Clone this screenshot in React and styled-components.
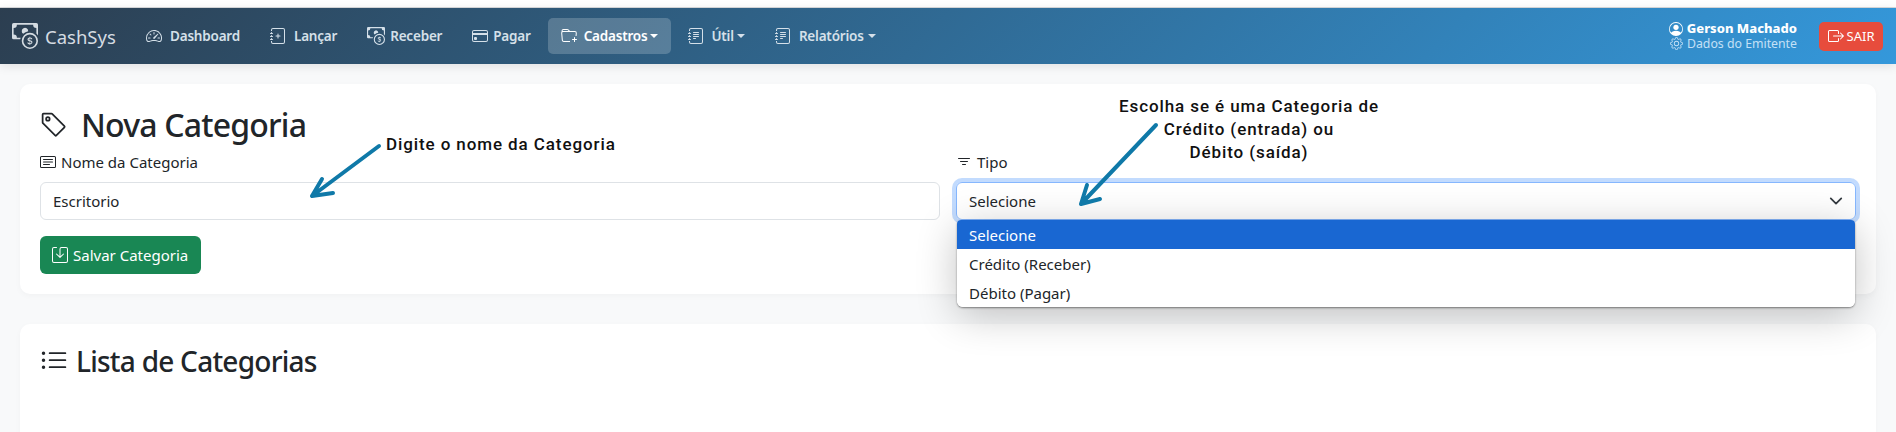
import React from 'react';
import styled, { createGlobalStyle } from 'styled-components';
import {
  BsCashCoin,
  BsSpeedometer2,
  BsJournalPlus,
  BsCreditCard,
  BsFolderPlus,
  BsJournalText,
  BsPersonCircle,
  BsGear,
  BsBoxArrowRight,
  BsTag,
  BsCardText,
  BsFilter,
  BsSave,
  BsListUl
} from 'react-icons/bs';

const fontStack = '"Noto Sans", "Open Sans", sans-serif';

const GlobalStyle = createGlobalStyle`
  html, body {
    margin: 0;
    height: 432px;
    overflow: hidden;
    background: #f8f9fa;
    font-family: ${fontStack};
    color: #212529;
  }
  * {
    box-sizing: border-box;
  }
`;

const Page = styled.div`
  position: relative;
  height: 432px;
  overflow: hidden;
`;

const TopStrip = styled.div`
  height: 8px;
  background: #fff;
  border-bottom: 1px solid #d9dadc;
`;

const Navbar = styled.nav`
  height: 56px;
  display: flex;
  align-items: center;
  padding: 0 13px 0 12px;
  background: linear-gradient(135deg, #2c3e50, #3498db);
  box-shadow: 0 2px 10px rgba(0, 0, 0, 0.1);
  position: relative;
`;

const Brand = styled.div`
  display: flex;
  align-items: center;
  gap: 7px;
  width: 121px;
  font-size: 18.5px;
  color: #d5dce2;
`;

const NavList = styled.div`
  display: flex;
  align-items: center;
  gap: 4px;
`;

const NavLink = styled.div`
  height: 36px;
  display: flex;
  align-items: center;
  gap: ${(p) => p.$gap || 8}px;
  padding: 0 13px;
  border-radius: 5px;
  font-size: 13.5px;
  font-weight: 600;
  letter-spacing: -0.2px;
  color: ${(p) => (p.$active ? '#fff' : '#d5e0e9')};
  background: ${(p) => (p.$active ? 'rgba(255, 255, 255, 0.2)' : 'transparent')};
`;

const Caret = styled.span`
  width: 0;
  height: 0;
  margin-left: -4px;
  border-top: 4px solid currentColor;
  border-left: 4px solid transparent;
  border-right: 4px solid transparent;
`;

const UserArea = styled.div`
  margin-left: auto;
  display: flex;
  align-items: center;
  gap: 22px;
`;

const UserBlock = styled.div`
  display: flex;
  flex-direction: column;
  align-items: flex-end;
  line-height: 15px;
`;

const UserName = styled.div`
  display: flex;
  align-items: center;
  gap: 4px;
  font-size: 13px;
  color: #fff;
  font-weight: 800;
`;

const UserLink = styled.div`
  display: flex;
  align-items: center;
  gap: 4px;
  font-size: 12.3px;
  color: #c4e0f6;
`;

const LogoutButton = styled.div`
  width: 64px;
  height: 29px;
  display: flex;
  align-items: center;
  justify-content: center;
  gap: 3px;
  border-radius: 5px;
  background: #e74c3c;
  color: #fff;
  font-size: 13px;
`;

const Main = styled.main`
  padding: 20px 20px 0;
  display: flex;
  flex-direction: column;
  gap: 30px;
`;

const Card = styled.section`
  background: #fff;
  border-radius: 10px;
  padding: 22px 20px 20px;
  box-shadow: 0 2px 6px rgba(0, 0, 0, 0.03);
  min-height: ${(p) => p.$minHeight || 0}px;
`;

const PageTitle = styled.h2`
  margin: 0 0 6px;
  display: flex;
  align-items: center;
  gap: 13px;
  font-size: 32px;
  line-height: 38px;
  font-weight: 500;
  letter-spacing: -0.8px;
`;

const SectionTitle = styled.h3`
  margin: 0;
  display: flex;
  align-items: center;
  gap: 8px;
  font-size: 28px;
  line-height: 30px;
  font-weight: 500;
  letter-spacing: -0.75px;
`;

const FormRow = styled.div`
  display: grid;
  grid-template-columns: 1fr 1fr;
  gap: 16px;
  margin-bottom: 16px;
`;

const Field = styled.div`
  position: relative;
`;

const Label = styled.div`
  display: flex;
  align-items: center;
  gap: 5px;
  height: 24px;
  margin-bottom: 8px;
  font-size: 15px;
`;

const TextInput = styled.div`
  height: 38px;
  display: flex;
  align-items: center;
  padding: 0 12px;
  border: 1px solid #dee2e6;
  border-radius: 6px;
  font-size: 15px;
`;

const SelectBox = styled(TextInput)`
  justify-content: space-between;
  border-color: #86b7fe;
  box-shadow: 0 0 0 4px rgba(13, 110, 253, 0.25);
  color: #212529;
`;

const Menu = styled.div`
  position: absolute;
  top: 70px;
  left: 1px;
  right: 1px;
  z-index: 3;
  background: #fff;
  border-radius: 4px 4px 6px 6px;
  overflow: hidden;
  box-shadow: 0 1px 2px rgba(0, 0, 0, 0.45);
`;

const MenuShadow = styled.div`
  position: absolute;
  top: 70px;
  left: 1px;
  right: 1px;
  height: 87px;
  z-index: 2;
  border-radius: 6px;
  box-shadow: 0 8px 40px rgba(0, 0, 0, 0.24);
`;

const MenuItem = styled.div`
  height: 29px;
  display: flex;
  align-items: center;
  padding: 0 12px;
  font-size: 15px;
  color: ${(p) => (p.$selected ? '#fff' : '#212529')};
  background: ${(p) => (p.$selected ? '#1967d2' : '#fff')};
`;

const SaveButton = styled.div`
  display: flex;
  width: fit-content;
  align-items: center;
  gap: 5px;
  height: 38px;
  padding: 0 13px 0 12px;
  border-radius: 6px;
  background: #198754;
  color: #fff;
  font-size: 15px;
`;

const Callout = styled.div`
  position: absolute;
  z-index: 5;
  left: ${(p) => p.$left}px;
  top: ${(p) => p.$top}px;
  width: ${(p) => p.$width}px;
  font-family: Roboto, sans-serif;
  font-size: 17px;
  line-height: 23px;
  font-weight: 500;
  letter-spacing: 0.9px;
  text-align: center;
  white-space: nowrap;
  color: #111;
`;

const ArrowSvg = styled.svg`
  position: absolute;
  z-index: 5;
  left: 0;
  top: 0;
`;

const Arrow = ({ d }) => (
  <ArrowSvg width="1896" height="432" fill="none" stroke="#0f79a8" strokeWidth="4" strokeLinecap="round" strokeLinejoin="round">
    <path d={d} />
  </ArrowSvg>
);

const SelectChevron = () => (
  <svg width="14" height="14" viewBox="0 0 16 16" fill="none" stroke="#343a40" strokeWidth="2" strokeLinecap="round" strokeLinejoin="round">
    <path d="m2 5 6 6 6-6" />
  </svg>
);

const navItems = [
  { label: 'Dashboard', icon: BsSpeedometer2 },
  { label: 'Lançar', icon: BsJournalPlus },
  { label: 'Receber', icon: BsCashCoin, size: 18, gap: 5 },
  { label: 'Pagar', icon: BsCreditCard, gap: 5 },
  { label: 'Cadastros', icon: BsFolderPlus, gap: 7, active: true, caret: true },
  { label: 'Útil', icon: BsJournalText, gap: 7, caret: true },
  { label: 'Relatórios', icon: BsJournalText, caret: true }
];

export default function App() {
  return (
    <Page>
      <GlobalStyle />
      <TopStrip />
      <Navbar>
        <Brand>
          <BsCashCoin size={26} />
          CashSys
        </Brand>
        <NavList>
          {navItems.map(({ label, icon: Icon, size, gap, active, caret }) => (
            <NavLink key={label} $active={active} $gap={gap}>
              <Icon size={size || 16} />
              {label}
              {caret && <Caret />}
            </NavLink>
          ))}
        </NavList>
        <UserArea>
          <UserBlock>
            <UserName>
              <BsPersonCircle size={14} />
              Gerson Machado
            </UserName>
            <UserLink>
              <BsGear size={13} />
              Dados do Emitente
            </UserLink>
          </UserBlock>
          <LogoutButton>
            <BsBoxArrowRight size={16} />
            SAIR
          </LogoutButton>
        </UserArea>
      </Navbar>
      <Main>
        <Card>
          <PageTitle>
            <BsTag size={28} />
            Nova Categoria
          </PageTitle>
          <FormRow>
            <Field>
              <Label>
                <BsCardText size={16} />
                Nome da Categoria
              </Label>
              <TextInput>Escritorio</TextInput>
            </Field>
            <Field>
              <Label>
                <BsFilter size={16} />
                Tipo
              </Label>
              <SelectBox>
                Selecione
                <SelectChevron />
              </SelectBox>
              <MenuShadow />
              <Menu>
                <MenuItem $selected>Selecione</MenuItem>
                <MenuItem>Crédito (Receber)</MenuItem>
                <MenuItem>Débito (Pagar)</MenuItem>
              </Menu>
            </Field>
          </FormRow>
          <SaveButton>
            <BsSave size={16} />
            Salvar Categoria
          </SaveButton>
        </Card>
        <Card $minHeight={200}>
          <SectionTitle>
            <BsListUl size={28} />
            Lista de Categorias
          </SectionTitle>
        </Card>
      </Main>
      <Callout $left={386} $top={133} $width={228}>Digite o nome da Categoria</Callout>
      <Callout $left={1109} $top={95} $width={280}>
        Escolha se é uma Categoria de
        <br />
        Crédito (entrada) ou
        <br />
        Débito (saída)
      </Callout>
      <Arrow d="M379 146 L312 196 M312 196 L333 193 M312 196 L322 179" />
      <Arrow d="M1156 125 L1081 204 M1081 204 L1100 199 M1081 204 L1087 185" />
    </Page>
  );
}
